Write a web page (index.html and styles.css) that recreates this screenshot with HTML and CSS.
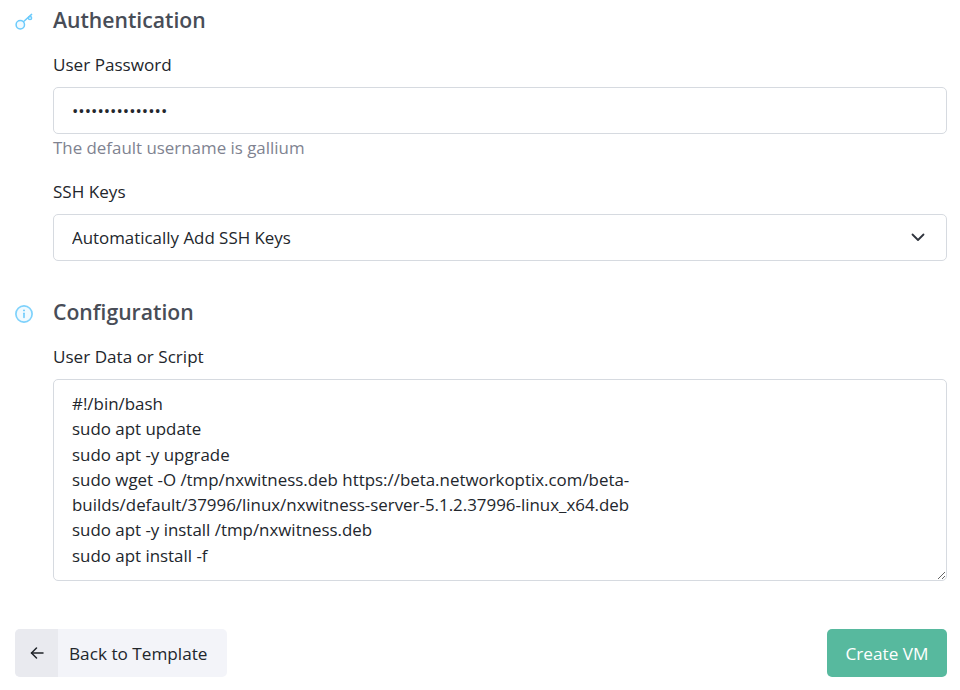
FILE: index.html
```html
<!DOCTYPE html>
<html lang="en">
<head>
  <meta charset="UTF-8">
  <meta name="viewport" content="width=device-width, initial-scale=1.0">
  <title>Create VM</title>
  <link rel="stylesheet" href="styles.css">
</head>
<body>
  <div class="container">
    <section class="section section-auth">
      <div class="section-icon">
        <svg width="20" height="20" viewBox="0 0 20 20" fill="none" stroke="#6ccbfc" stroke-width="1.5" stroke-linecap="round">
          <circle cx="5.3" cy="12.7" r="4.2" fill="#f1faff"/>
          <path d="M8.4 9.8 L16.6 2.4"/>
          <circle cx="15" cy="6" r="1.6"/>
        </svg>
      </div>
      <div class="section-body">
        <h2>Authentication</h2>
        <div class="form-group">
          <label for="password">User Password</label>
          <input type="password" id="password" value="passwordpasswor">
          <p class="help">The default username is gallium</p>
        </div>
        <div class="form-group">
          <label for="keys">SSH Keys</label>
          <div class="select-wrap">
            <select id="keys">
              <option>Automatically Add SSH Keys</option>
            </select>
            <svg class="chevron" width="14" height="9" viewBox="0 0 14 9" fill="none" stroke="#2f343d" stroke-width="1.8" stroke-linecap="round" stroke-linejoin="round">
              <path d="M1.5 1.5 L7 7 L12.5 1.5"/>
            </svg>
          </div>
        </div>
      </div>
    </section>

    <section class="section section-config">
      <div class="section-icon">
        <svg width="20" height="20" viewBox="0 0 20 20" fill="none" stroke="#7fd2fc" stroke-width="1.7" stroke-linecap="round">
          <circle cx="9" cy="10" r="8.1" fill="#f1faff"/>
          <path d="M9 9.2 V13.6" stroke="#5cc4fb" stroke-width="1.4"/>
          <path d="M9 6.3 V6.5" stroke="#5cc4fb" stroke-width="1.7"/>
        </svg>
      </div>
      <div class="section-body">
        <h2>Configuration</h2>
        <div class="form-group">
          <label for="script">User Data or Script</label>
          <textarea id="script">#!/bin/bash
sudo apt update
sudo apt -y upgrade
sudo wget -O /tmp/nxwitness.deb https://beta.networkoptix.com/beta-builds/default/37996/linux/nxwitness-server-5.1.2.37996-linux_x64.deb
sudo apt -y install /tmp/nxwitness.deb
sudo apt install -f</textarea>
        </div>
      </div>
    </section>

    <div class="actions">
      <button class="btn-back">
        <span class="back-arrow">
          <svg width="16" height="16" viewBox="0 0 16 16" fill="none" stroke="#1f2329" stroke-width="1.5" stroke-linecap="round" stroke-linejoin="round">
            <path d="M14 8 H2.5"/>
            <path d="M7.5 3 L2.5 8 L7.5 13"/>
          </svg>
        </span>
        <span class="back-label">Back to Template</span>
      </button>
      <button class="btn-create">Create VM</button>
    </div>
  </div>
</body>
</html>
```

FILE: styles.css
```css
* {
  box-sizing: border-box;
}
body {
  margin: 0;
  background: #fff;
  font-family: "Open Sans", "Noto Sans", sans-serif;
  font-size: 16.9px;
  color: #22262c;
}
.container {
  padding: 0 13px 0 15px;
}
.section {
  display: flex;
}
.section-auth {
  padding-top: 5px;
}
.section-config {
  margin-top: 36px;
}
.section-icon {
  width: 38px;
  flex-shrink: 0;
  padding-top: 7px;
}
.section-icon svg {
  display: block;
}
.section-body {
  flex: 1;
  min-width: 0;
}
h2 {
  margin: 0;
  font-size: 21.2px;
  line-height: 30px;
  font-weight: 600;
  color: #484d57;
}
.form-group {
  margin-top: 19px;
}
.form-group + .form-group {
  margin-top: 22px;
}
label {
  display: block;
  margin-bottom: 11px;
  font-size: 17.1px;
  line-height: 22px;
  font-weight: 500;
  color: #22262c;
}
input, select, textarea {
  display: block;
  width: 100%;
  border: 1.5px solid #d6dae0;
  border-radius: 5px;
  background: #fff;
  font: inherit;
  color: #22262c;
  padding: 0 18px;
  outline: none;
}
input, select {
  height: 47px;
}
select {
  appearance: none;
}
textarea {
  height: 202px;
  padding: 11px 24px 11px 18px;
  line-height: 25.3px;
  resize: vertical;
}
.help {
  margin: 3px 0 0;
  line-height: 22px;
  color: #7f8391;
}
.select-wrap {
  position: relative;
}
.chevron {
  position: absolute;
  right: 22px;
  top: 19px;
}
.actions {
  display: flex;
  justify-content: space-between;
  margin-top: 48px;
}
button {
  height: 48px;
  border: none;
  border-radius: 5px;
  font: inherit;
  font-size: 17.2px;
  font-weight: 500;
  padding: 0;
  cursor: pointer;
}
.btn-back {
  display: flex;
  align-items: stretch;
  width: 212px;
  background: #f3f4f9;
  color: #22262c;
  overflow: hidden;
}
.back-arrow {
  display: flex;
  align-items: center;
  justify-content: center;
  width: 43px;
  background: #e9eaef;
}
.back-label {
  align-self: center;
  margin-left: 11px;
}
.btn-create {
  width: 120px;
  background: #57b99e;
  color: #fff;
}
```
